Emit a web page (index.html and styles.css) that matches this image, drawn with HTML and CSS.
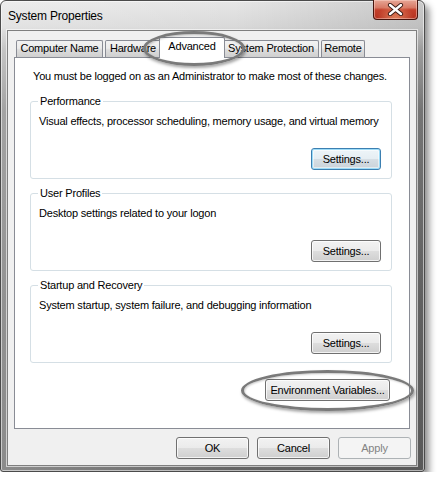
FILE: index.html
```html
<!DOCTYPE html>
<html>
<head>
<meta charset="utf-8">
<title>System Properties</title>
<link rel="stylesheet" href="styles.css">
</head>
<body>
<div class="window">
  <div class="titlebar">
    <span class="title">System Properties</span>
    <div class="close">
      <svg width="17" height="13" viewBox="0 0 17 13">
        <path d="M3 2 L14 11 M14 2 L3 11" stroke="#3a1a14" stroke-width="4.2" stroke-linecap="round"/>
        <path d="M3 2 L14 11 M14 2 L3 11" stroke="#ffffff" stroke-width="2.4" stroke-linecap="round"/>
      </svg>
    </div>
  </div>
  <div class="client">
    <div class="tabs">
      <div class="tab t-cn">Computer Name</div>
      <div class="tab t-hw">Hardware</div>
      <div class="tab t-adv active">Advanced</div>
      <div class="tab t-sp">System Protection</div>
      <div class="tab t-rm">Remote</div>
    </div>
    <div class="panel">
      <p class="notice">You must be logged on as an Administrator to make most of these changes.</p>
      <fieldset class="group">
        <legend>Performance</legend>
        <p class="desc">Visual effects, processor scheduling, memory usage, and virtual memory</p>
        <div class="btn-row"><button class="btn btn-settings default">Settings...</button></div>
      </fieldset>
      <fieldset class="group">
        <legend>User Profiles</legend>
        <p class="desc">Desktop settings related to your logon</p>
        <div class="btn-row"><button class="btn btn-settings">Settings...</button></div>
      </fieldset>
      <fieldset class="group">
        <legend>Startup and Recovery</legend>
        <p class="desc">System startup, system failure, and debugging information</p>
        <div class="btn-row"><button class="btn btn-settings">Settings...</button></div>
      </fieldset>
      <div class="env-row"><button class="btn btn-env">Environment Variables...</button></div>
    </div>
    <div class="footer">
      <button class="btn btn-dlg">OK</button>
      <button class="btn btn-dlg">Cancel</button>
      <button class="btn btn-dlg" disabled>Apply</button>
    </div>
  </div>
  <div class="ring ring-tab"></div>
  <div class="ring ring-env"></div>
</div>
</body>
</html>
```

FILE: styles.css
```css
html, body {
  margin: 0;
  padding: 0;
  background: #ffffff;
}
body {
  font-family: "Liberation Sans", Arial, sans-serif;
  font-size: 11px;
  letter-spacing: -0.2px;
  color: #000;
}
.window {
  position: relative;
  box-sizing: border-box;
  width: 425px;
  height: 472px;
  border: 1px solid #4b4b4b;
  border-radius: 6px 6px 3px 3px;
  padding: 0 7px 5px 6px;
  background:
    linear-gradient(90deg, rgba(255,255,255,0.25), rgba(255,255,255,0) 55%, rgba(0,0,0,0.12)),
    linear-gradient(180deg, #e6e6e6 0px, #d9d9d9 26px, #b0b0b0 50px, #858585 110px, #6e6e6e 300px, #656565 100%);
  box-shadow: inset 0 0 0 1px rgba(255,255,255,0.55), 4px 5px 7px rgba(0,0,0,0.45);
  display: flex;
  flex-direction: column;
}
.titlebar {
  height: 29px;
  display: flex;
  align-items: flex-start;
  justify-content: space-between;
}
.title {
  margin-top: 8px;
  margin-left: 1px;
  font-size: 12px;
  line-height: 14px;
  letter-spacing: -0.2px;
  color: #000;
}
.close {
  margin-top: -1px;
  margin-right: -1px;
  width: 45px;
  height: 20px;
  box-sizing: border-box;
  border: 1px solid #47140d;
  border-top: none;
  border-radius: 0 0 4px 4px;
  background:
    radial-gradient(ellipse at 50% 100%, rgba(255,190,140,0.55), rgba(255,150,100,0) 60%),
    linear-gradient(180deg, #e7a796 0%, #d87a66 40%, #c4402b 52%, #b53220 100%);
  box-shadow: inset 0 0 0 1px rgba(255,220,210,0.45);
  display: flex;
  align-items: center;
  justify-content: center;
}
.client {
  box-sizing: border-box;
  height: 436px;
  background: #f0f0f0;
  border: 1px solid #7f7f7f;
  box-shadow: 0 0 0 1px rgba(255,255,255,0.6);
  display: flex;
  flex-direction: column;
}
.tabs {
  display: flex;
  align-items: flex-end;
  height: 26px;
  padding-left: 8px;
  position: relative;
  z-index: 2;
}
.tab {
  box-sizing: border-box;
  height: 17px;
  border: 1px solid #898c95;
  border-bottom: none;
  border-radius: 2px 2px 0 0;
  background: linear-gradient(180deg, #f2f2f2 0%, #ebebeb 45%, #dddddd 55%, #cfcfcf 100%);
  text-align: center;
  line-height: 15px;
  font-size: 11px;
  margin-right: 2px;
  white-space: nowrap;
}
.t-cn { width: 87px; }
.t-hw { width: 56px; margin-right: 0; }
.t-adv { width: 66px; margin-left: -2px; margin-right: -2px; }
.t-sp { width: 96px; }
.t-rm { width: 44px; }
.tab.active {
  position: relative;
  z-index: 3;
  height: 21px;
  margin-bottom: -1px;
  background: #ffffff;
  line-height: 16px;
  padding-bottom: 2px;
}
.panel {
  box-sizing: border-box;
  margin-left: 6px;
  width: 396px;
  height: 372px;
  background: #ffffff;
  border: 1px solid #898c95;
  padding: 12px 17px 0 15px;
  display: flex;
  flex-direction: column;
}
.notice {
  margin: 0;
  padding-left: 3px;
  line-height: 13px;
  white-space: nowrap;
}
.group {
  margin: 12px 0 0 0;
  padding: 7px 10px 8px 8px;
  border: 1px solid #d5dfe5;
  border-radius: 3px;
  min-width: 0;
}
.group + .group {
  margin-top: 8px;
}
.group legend {
  padding: 0 2px;
  margin-left: -1px;
  line-height: 13px;
}
.desc {
  margin: 0;
  line-height: 13px;
  white-space: nowrap;
}
.btn-row {
  display: flex;
  justify-content: flex-end;
  margin-top: 20px;
}
.btn {
  box-sizing: border-box;
  height: 22px;
  padding: 0;
  font-family: "Liberation Sans", Arial, sans-serif;
  font-size: 11px;
  letter-spacing: -0.2px;
  color: #000;
  border: 1px solid #707070;
  border-radius: 3px;
  background: linear-gradient(180deg, #f2f2f2 0%, #ebebeb 48%, #dddddd 52%, #cfcfcf 100%);
  box-shadow: inset 0 0 0 1px rgba(255,255,255,0.75);
}
.btn-settings { width: 70px; }
.btn.default {
  border-color: #3c7fb1;
  box-shadow: inset 0 0 0 1px #9ddcf8, inset 0 0 0 2px rgba(255,255,255,0.5);
  background: linear-gradient(180deg, #eef5f9 0%, #e6eef3 48%, #d6dee4 52%, #c9d2d9 100%);
}
.env-row {
  display: flex;
  justify-content: flex-end;
  margin-top: 16px;
  padding-right: 2px;
}
.btn-env { width: 125px; }
.footer {
  display: flex;
  justify-content: flex-end;
  gap: 8px;
  margin-top: 8px;
  padding-right: 5px;
}
.btn-dlg { width: 73px; }
.btn:disabled {
  color: #838383;
  border-color: #adb2b5;
  background: #f4f4f4;
  box-shadow: none;
}
.ring {
  position: absolute;
  box-sizing: border-box;
  border: 3px solid #7a7a7a;
  border-radius: 50%;
  box-shadow: 1px 2px 3px rgba(0,0,0,0.35), inset 1px 1px 2px rgba(0,0,0,0.2);
  z-index: 10;
  pointer-events: none;
}
.ring-tab {
  left: 142px;
  top: 30px;
  width: 102px;
  height: 35px;
}
.ring-env {
  left: 240px;
  top: 369px;
  width: 173px;
  height: 41px;
}
```
